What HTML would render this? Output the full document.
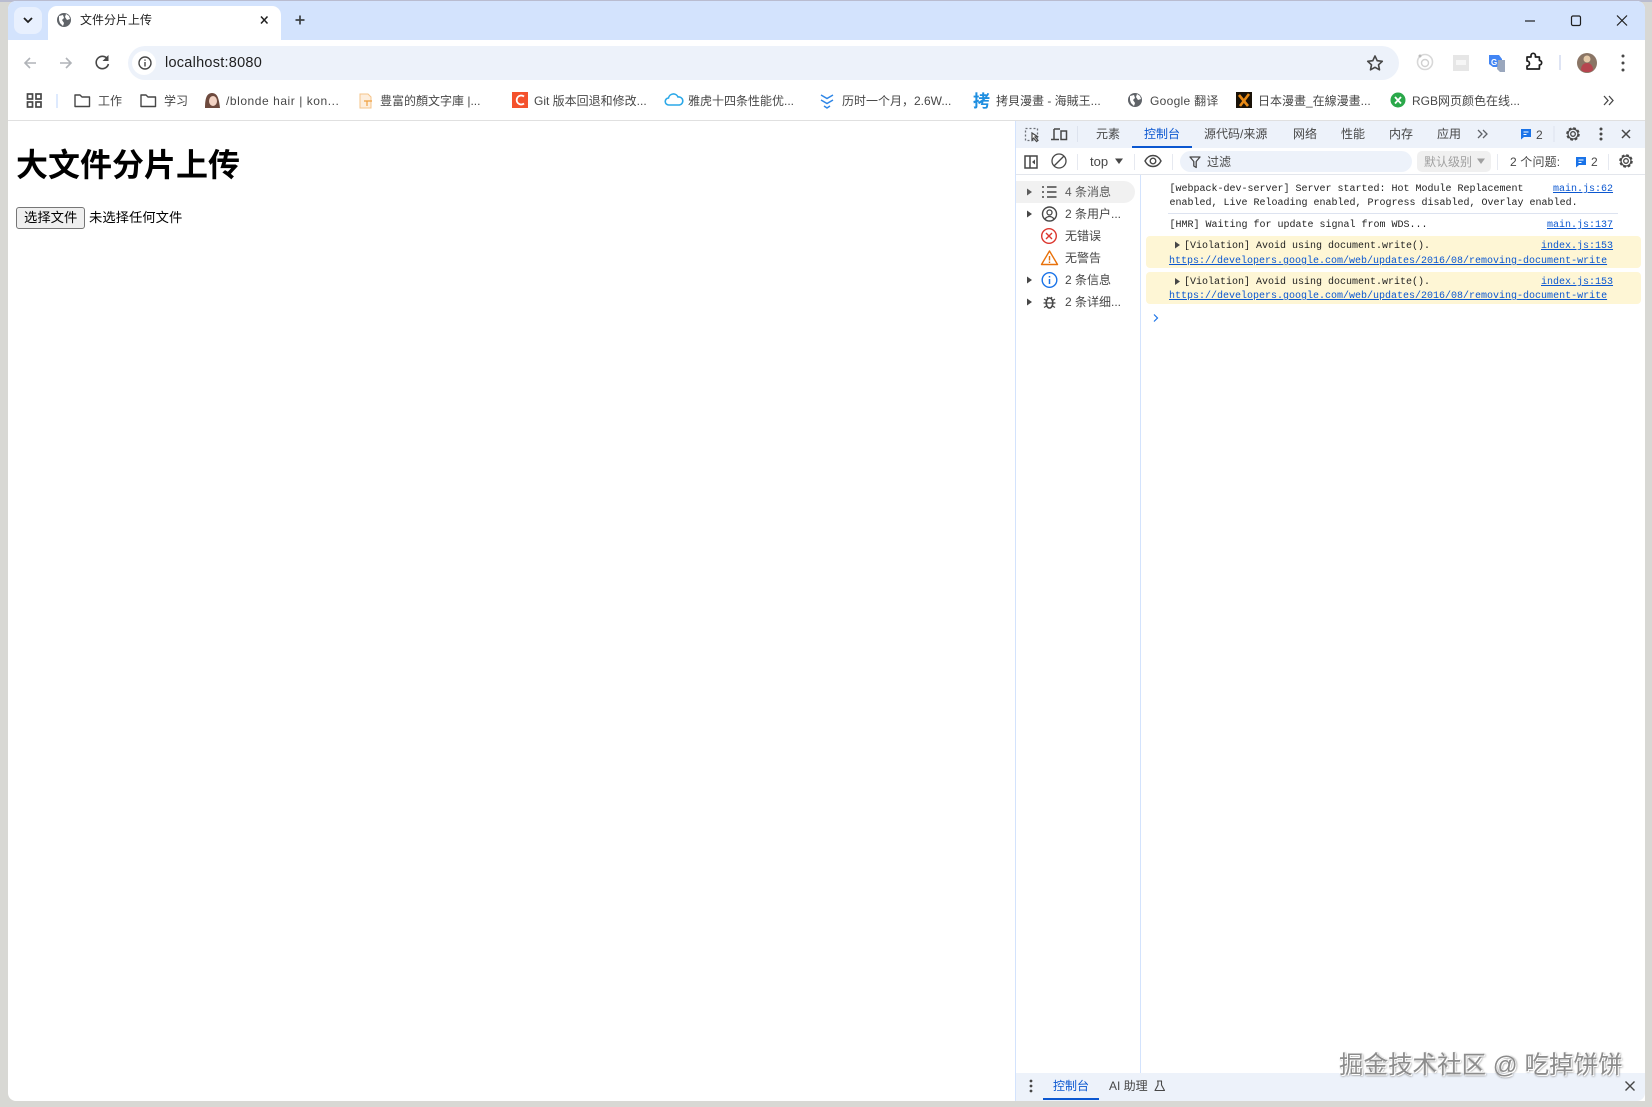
<!DOCTYPE html>
<html lang="zh">
<head>
<meta charset="utf-8">
<title>文件分片上传</title>
<style>
html,body{margin:0;padding:0;width:1652px;height:1107px;overflow:hidden;background:#d8d8d4}
body{position:relative;font-family:"Liberation Sans","Noto Sans CJK SC",sans-serif;color:#1f1f1f}
.b{position:absolute}
.t{position:absolute;white-space:nowrap;line-height:20px;height:20px;font-size:12px}
.bm{color:#474747;font-size:12px}
.dt{color:#474747;font-size:12px}
.m{position:absolute;white-space:nowrap;font-family:"Liberation Mono","Noto Sans CJK SC",monospace;font-size:10px;line-height:14px;height:14px;color:#1f1f1f}
.l{color:#0b57d0;text-decoration:underline}
svg{position:absolute;left:0;top:0}
</style>
</head>
<body>
<!-- window -->
<div class="b" style="left:0;top:0;width:1652px;height:2px;background:#b9bcd0"></div>
<div class="b" style="left:8px;top:1px;width:1637px;height:1100px;background:#fff;border-radius:8px;overflow:hidden">
  <div class="b" style="left:0;top:0;width:1637px;height:39px;background:#d3e3fd"></div>
</div>
<!-- down button -->
<div class="b" style="left:14px;top:7px;width:28px;height:27px;background:#e8f0fe;border-radius:8px"></div>
<!-- active tab -->
<div class="b" style="left:48px;top:6px;width:233px;height:35px;background:#fff;border-radius:9px 9px 0 0"></div>
<div class="t" style="left:80px;top:10px;color:#1f1f1f">文件分片上传</div>
<!-- omnibox -->
<div class="b" style="left:128px;top:46px;width:1271px;height:34px;background:#edf2fa;border-radius:17px"></div>
<div class="b" style="left:132px;top:51px;width:24px;height:24px;background:#fff;border-radius:12px"></div>
<div class="t" style="left:165px;top:53px;font-size:14.5px;color:#1f1f1f;letter-spacing:.25px">localhost:8080</div>
<!-- bookmarks -->
<div class="b" style="left:8px;top:120px;width:1637px;height:1px;background:#e0e0e0"></div>
<div class="t bm" style="left:98px;top:91px">工作</div>
<div class="t bm" style="left:164px;top:91px">学习</div>
<div class="t bm" style="left:226px;top:91px;letter-spacing:.55px">/blonde hair | kon...</div>
<div class="t bm" style="left:380px;top:91px">豊富的顏文字庫 |...</div>
<div class="t bm" style="left:534px;top:91px">Git 版本回退和修改...</div>
<div class="t bm" style="left:688px;top:91px">雅虎十四条性能优...</div>
<div class="t bm" style="left:842px;top:91px">历时一个月，2.6W...</div>
<div class="t bm" style="left:996px;top:91px">拷貝漫畫 - 海賊王...</div>
<div class="t bm" style="left:1150px;top:91px;letter-spacing:.3px">Google 翻译</div>
<div class="t bm" style="left:1258px;top:91px">日本漫畫_在線漫畫...</div>
<div class="t bm" style="left:1412px;top:91px">RGB网页颜色在线...</div>
<!-- page -->
<div class="t" style="left:16px;top:147px;height:36px;line-height:36px;font-size:32px;font-weight:700;color:#000">大文件分片上传</div>
<div class="b" style="left:16px;top:207px;width:67px;height:20px;background:#efefef;border:1px solid #767676;border-radius:3px"></div>
<div class="t" style="left:24px;top:208px;font-size:13.33px;color:#000">选择文件</div>
<div class="t" style="left:89px;top:208px;font-size:13.33px;color:#000">未选择任何文件</div>
<!-- devtools -->
<div class="b" style="left:1015px;top:121px;width:630px;height:980px;background:#fff;border-left:1px solid #d3e3fd;box-sizing:border-box"></div>
<div class="b" style="left:1016px;top:121px;width:629px;height:27px;background:#edf2fa"></div>
<div class="b" style="left:1016px;top:174px;width:629px;height:1px;background:#e3e6ec"></div>
<div class="b" style="left:1140px;top:175px;width:1px;height:898px;background:#d3e3fd"></div>
<div class="b" style="left:1132px;top:146px;width:60px;height:2px;background:#0b57d0"></div>
<div class="t dt" style="left:1096px;top:124px">元素</div>
<div class="t" style="left:1144px;top:124px;color:#0b57d0">控制台</div>
<div class="t dt" style="left:1204px;top:124px">源代码/来源</div>
<div class="t dt" style="left:1293px;top:124px">网络</div>
<div class="t dt" style="left:1341px;top:124px">性能</div>
<div class="t dt" style="left:1389px;top:124px">内存</div>
<div class="t dt" style="left:1437px;top:124px">应用</div>
<div class="t dt" style="left:1536px;top:125px">2</div>
<!-- row 2 -->
<div class="t dt" style="left:1090px;top:152px;font-size:13px">top</div>
<div class="b" style="left:1180px;top:151px;width:232px;height:21px;background:#edf2fa;border-radius:11px"></div>
<div class="t dt" style="left:1207px;top:152px">过滤</div>
<div class="b" style="left:1417px;top:151px;width:74px;height:21px;background:#f0f0f0;border-radius:5px"></div>
<div class="t" style="left:1424px;top:152px;color:#a0a0a0">默认级别</div>
<div class="t dt" style="left:1510px;top:152px;letter-spacing:.15px">2 个问题:</div>
<div class="t dt" style="left:1591px;top:152px">2</div>
<!-- sidebar -->
<div class="b" style="left:1016px;top:181px;width:119px;height:22px;background:#f1f1f1;border-radius:0 11px 11px 0"></div>
<div class="t" style="left:1065px;top:182px;color:#5c5c5c">4 条消息</div>
<div class="t dt" style="left:1065px;top:204px">2 条用户...</div>
<div class="t dt" style="left:1065px;top:226px">无错误</div>
<div class="t dt" style="left:1065px;top:248px">无警告</div>
<div class="t dt" style="left:1065px;top:270px">2 条信息</div>
<div class="t dt" style="left:1065px;top:292px">2 条详细...</div>
<!-- console -->
<div class="m" style="left:1169.500px;top:183px">[webpack-dev-server] Server started: Hot Module Replacement</div>
<div class="m" style="left:1169.500px;top:197px">enabled, Live Reloading enabled, Progress disabled, Overlay enabled.</div>
<div class="m l" style="left:1553px;top:183px">main.js:62</div>
<div class="b" style="left:1168px;top:213px;width:450px;height:1px;background:#dde3f0"></div>
<div class="m" style="left:1169.500px;top:219px">[HMR] Waiting for update signal from WDS...</div>
<div class="m l" style="left:1547px;top:219px">main.js:137</div>
<div class="b" style="left:1146px;top:236px;width:495px;height:32px;background:#fef6d5;border-radius:4px"></div>
<div class="m" style="left:1184px;top:240px">[Violation] Avoid using document.write().</div>
<div class="m l" style="left:1541px;top:240px">index.js:153</div>
<div class="m l" style="left:1169px;top:255px">https://developers.google.com/web/updates/2016/08/removing-document-write</div>
<div class="b" style="left:1146px;top:272px;width:495px;height:32px;background:#fef6d5;border-radius:4px"></div>
<div class="m" style="left:1184px;top:276px">[Violation] Avoid using document.write().</div>
<div class="m l" style="left:1541px;top:276px">index.js:153</div>
<div class="m l" style="left:1169px;top:290px">https://developers.google.com/web/updates/2016/08/removing-document-write</div>
<!-- drawer -->
<div class="b" style="left:1016px;top:1073px;width:629px;height:28px;background:#edf2fa;border-radius:0 0 8px 0"></div>
<div class="b" style="left:1043px;top:1098px;width:56px;height:2px;background:#0b57d0"></div>
<div class="t" style="left:1053px;top:1076px;color:#0b57d0">控制台</div>
<div class="t dt" style="left:1109px;top:1076px">AI 助理</div>
<!-- watermark -->
<div class="t" style="left:1339px;top:1051px;height:30px;line-height:30px;font-size:24.5px;color:#8c8c8c;text-shadow:1px 1px 0 #fff,-1px -1px 0 #fff,1px 1px 2px #555">掘金技术社区 @ 吃掉饼饼</div>

<svg width="1652" height="1107" viewBox="0 0 1652 1107" fill="none">
  <!-- tab strip -->
  <path d="M24 18l4 4 4-4" stroke="#1f1f1f" stroke-width="1.800"/>
  <circle cx="64" cy="20" r="7" fill="#5f6368"/>
  <path d="M59 16l4-1 1 3-2 2 2 3-1 3-3-3-1-3zM66 14l3 2 1 3-3 1-2-3z" fill="#fff"/>
  <path d="M261 16.500l6.500 7m0-7l-6.500 7" stroke="#1f1f1f" stroke-width="1.500"/>
  <path d="M300 15.500v9m-4.500-4.500h9" stroke="#3c4043" stroke-width="1.700"/>
  <!-- window controls -->
  <path d="M1525 21h10" stroke="#1f1f1f" stroke-width="1.200"/>
  <rect x="1571.500" y="16" width="9" height="9.500" rx="1.500" stroke="#1f1f1f" stroke-width="1.200"/>
  <path d="M1617 15.500l10 10m0-10l-10 10" stroke="#1f1f1f" stroke-width="1.200"/>
  <!-- nav -->
  <path d="M36 67H25m5-5l-5 5 5 5" transform="translate(0,-4)" stroke="#b0b3b8" stroke-width="1.600"/>
  <path d="M60 67h11m-5-5l5 5-5 5" transform="translate(0,-4)" stroke="#b0b3b8" stroke-width="1.600"/>
  <path d="M107.500 59a6.200 6.200 0 1 0 .9 5" stroke="#474747" stroke-width="1.600"/>
  <path d="M108.500 55v6h-6z" fill="#474747"/>
  <circle cx="145" cy="63" r="6" stroke="#474747" stroke-width="1.400"/>
  <path d="M145 62v4.500M145 59.500v1.300" stroke="#474747" stroke-width="1.400"/>
  <!-- star -->
  <path d="M1375 56l2.200 4.700 5.100.6-3.800 3.500 1 5-4.500-2.500-4.500 2.500 1-5-3.800-3.500 5.100-.6z" stroke="#474747" stroke-width="1.600" stroke-linejoin="round"/>
  <!-- extensions -->
  <circle cx="1425" cy="62" r="7.500" stroke="#d8d8d8" stroke-width="1.600"/>
  <circle cx="1425" cy="63" r="3.500" stroke="#d0d0d0" stroke-width="1.400"/>
  <circle cx="1420" cy="56" r="1.500" fill="#bbb"/>
  <rect x="1453" y="55" width="16" height="16" fill="#e6e6e6"/>
  <rect x="1456" y="60" width="10" height="5" fill="#f6f6f6"/>
  <path d="M1489 55h10l3 4v9l-3-1h-6l-4-3z" fill="#4285f4"/>
  <path d="M1498 60h7v12h-5l-3-3z" fill="#9aa7bd"/>
  <text x="1491" y="65" font-size="8" font-weight="700" fill="#fff" font-family="Liberation Sans">G</text>
  <path d="M1527 57h4v-1.500a2.200 2.200 0 0 1 4.400 0V57h4v3.500a2.200 2.200 0 0 1 0 4.500V69h-12.400v-3a2.500 2.500 0 0 0 0-5z" stroke="#1f1f1f" stroke-width="1.700" stroke-linejoin="round"/>
  <path d="M1560 55v15" stroke="#d3daf0" stroke-width="1.500"/>
  <circle cx="1587" cy="63" r="10" fill="#8a7565"/>
  <path d="M1581 70c0-5 3-7 6-7s6 2 6 7l-3 2h-6z" fill="#b5454f"/>
  <circle cx="1587" cy="59" r="3.500" fill="#e4c9a8"/>
  <circle cx="1623" cy="56" r="1.500" fill="#474747"/><circle cx="1623" cy="63" r="1.500" fill="#474747"/><circle cx="1623" cy="70" r="1.500" fill="#474747"/>
  <!-- bookmarks icons -->
  <g stroke="#474747" stroke-width="1.700"><rect x="27.500" y="94" width="5" height="5"/><rect x="36" y="94" width="5" height="5"/><rect x="27.500" y="102" width="5" height="5"/><rect x="36" y="102" width="5" height="5"/></g>
  <path d="M57 94v14" stroke="#d3e3fd" stroke-width="1.500"/>
  <path d="M75 95h5l2 2h7.500v9.500H75z" stroke="#474747" stroke-width="1.400" stroke-linejoin="round"/>
  <path d="M141 95h5l2 2h7.500v9.500H141z" stroke="#474747" stroke-width="1.400" stroke-linejoin="round"/>
  <path d="M205 108c0-8 1-15 7-15s7 7 8 15z" fill="#6e4a3e"/>
  <ellipse cx="213" cy="101" rx="4" ry="5" fill="#f3d3c4"/>
  <path d="M360 94h8l3 3v11h-11z" fill="#fdeedd" stroke="#f5c48a"/>
  <path d="M364 101h8M367 101v5" stroke="#f0a040" stroke-width="1.200"/>
  <rect x="512" y="92" width="16" height="16" fill="#f4512c"/>
  <path d="M524 96.500a4.500 4.500 0 1 0 0 7" stroke="#fff" stroke-width="1.800"/>
  <path d="M669 105a3.500 3.500 0 0 1-.5-7 5 5 0 0 1 9.500-1 4 4 0 0 1 1.500 8z" stroke="#2aa8e8" stroke-width="1.600"/>
  <path d="M821 95l6 3.500 6-3.500M821 100l6 3.500 6-3.500M824 106l3 2 3-2" stroke="#2f86e6" stroke-width="1.500"/>
  <text x="973" y="107" font-size="17" font-weight="700" fill="#1e8ee0" font-family="Liberation Sans, Noto Sans CJK SC, sans-serif">拷</text>
  <circle cx="1135" cy="100" r="7" fill="#5f6368"/>
  <path d="M1130 96l4-1 1 3-2 2 2 3-1 3-3-3-1-3zM1137 94l3 2 1 3-3 1-2-3z" fill="#fff"/>
  <rect x="1236" y="92" width="16" height="16" fill="#1a1208"/>
  <path d="M1239 95l9 11M1249 94l-9 12" stroke="#e88a16" stroke-width="2.600"/>
  <circle cx="1398" cy="100" r="7.500" fill="#2aa84a"/>
  <path d="M1395 97l6 6.500m0-6.500l-6 6.500" stroke="#fff" stroke-width="1.800"/>
  <path d="M1604 96l4 4.500-4 4.500M1609 96l4 4.500-4 4.500" stroke="#474747" stroke-width="1.300"/>
  <!-- devtools tabbar -->
  <rect x="1025.500" y="128.500" width="12" height="12" stroke="#6b6f76" stroke-width="1.300" stroke-dasharray="2 2"/>
  <path d="M1032 133v7l1.600-1.800 3 3.300 1.400-1.200-3-3.300 2.400-.5z" fill="#fff" stroke="#474747" stroke-width="1.200"/>
  <path d="M1054 129h6M1054 129v10M1051 139.500h8" stroke="#474747" stroke-width="1.500"/>
  <rect x="1061" y="131" width="5.500" height="8.500" stroke="#474747" stroke-width="1.500"/>
  <path d="M1077.500 126v16" stroke="#dde3ee"/>
  <path d="M1478 130l4 4-4 4M1483 130l4 4-4 4" stroke="#5f6368" stroke-width="1.300"/>
  <path d="M1521 129h10v8h-7l-3 2.500z" fill="#1a73e8"/>
  <path d="M1523.500 132h5M1523.500 134.500h3" stroke="#fff"/>
  <path d="M1554 126v16" stroke="#dde3ee"/>
  <g transform="translate(1573,134)" stroke="#474747"><circle r="5.600" stroke-width="2.400" stroke-dasharray="2.600 1.800"/><circle r="5" stroke-width="1.200"/><circle r="2.300" stroke-width="1.300"/></g>
  <circle cx="1601" cy="129" r="1.500" fill="#474747"/><circle cx="1601" cy="134" r="1.500" fill="#474747"/><circle cx="1601" cy="139" r="1.500" fill="#474747"/>
  <path d="M1622 130l8 8m0-8l-8 8" stroke="#474747" stroke-width="1.500"/>
  <!-- toolbar row 2 -->
  <rect x="1025" y="156" width="12" height="12" stroke="#474747" stroke-width="1.500"/>
  <path d="M1030 156v12" stroke="#474747" stroke-width="1.500"/>
  <path d="M1035 159.500v5l-3-2.500z" fill="#474747"/>
  <circle cx="1059" cy="161" r="7" stroke="#474747" stroke-width="1.300"/>
  <path d="M1054 166l10-10" stroke="#474747" stroke-width="1.300"/>
  <path d="M1077.500 154v16M1134.500 154v16M1172.500 154v16M1497.500 154v16M1608.500 154v16" stroke="#e6e9f0"/>
  <path d="M1115 158.500h8l-4 5.500z" fill="#474747"/>
  <path d="M1145 161c2-4 5-5.500 8-5.500s6 1.500 8 5.500c-2 4-5 5.500-8 5.500s-6-1.500-8-5.500z" stroke="#474747" stroke-width="1.400"/>
  <circle cx="1153" cy="161" r="2.800" stroke="#474747" stroke-width="1.400"/>
  <path d="M1190 157h10l-3.800 4.500v6l-2.400-1.500v-4.500z" stroke="#474747" stroke-width="1.300" stroke-linejoin="round"/>
  <path d="M1477 158.500h8l-4 5.500z" fill="#a0a0a0"/>
  <path d="M1576 157h10v8h-7l-3 2.500z" fill="#1a73e8"/>
  <path d="M1578.500 160h5M1578.500 162.500h3" stroke="#fff"/>
  <g transform="translate(1626,161)" stroke="#474747"><circle r="5.600" stroke-width="2.400" stroke-dasharray="2.600 1.800"/><circle r="5" stroke-width="1.200"/><circle r="2.300" stroke-width="1.300"/></g>
  <!-- sidebar icons -->
  <g fill="#474747">
    <path d="M1027 188.500l5 3.500-5 3.500z" fill="#5c5c5c"/>
    <path d="M1027 210.500l5 3.500-5 3.500z"/>
    <path d="M1027 276.500l5 3.500-5 3.500z"/>
    <path d="M1027 298.500l5 3.500-5 3.500z"/>
  </g>
  <path d="M1042 187h2M1042 192h2M1042 197h2M1047 187h9.500M1047 192h9.500M1047 197h9.500" stroke="#474747" stroke-width="1.500"/>
  <circle cx="1049.500" cy="214" r="7" stroke="#474747" stroke-width="1.400"/>
  <circle cx="1049.500" cy="212.500" r="2.500" stroke="#474747" stroke-width="1.300"/>
  <path d="M1045 219c1.500-2 3-2.500 4.500-2.500s3 .5 4.500 2.500" stroke="#474747" stroke-width="1.300"/>
  <circle cx="1049" cy="236" r="7.300" stroke="#dc362e" stroke-width="1.400"/>
  <path d="M1046 233l6 6m0-6l-6 6" stroke="#dc362e" stroke-width="1.400"/>
  <path d="M1049.500 251l8 13.500h-16z" stroke="#e8710a" stroke-width="1.400" stroke-linejoin="round"/>
  <path d="M1049.500 256v4.500M1049.500 261.500v1.500" stroke="#e8710a" stroke-width="1.400"/>
  <circle cx="1049.500" cy="280" r="7.300" stroke="#1a73e8" stroke-width="1.400"/>
  <path d="M1049.500 279v5M1049.500 276v1.500" stroke="#1a73e8" stroke-width="1.500"/>
  <ellipse cx="1049.500" cy="303" rx="3.300" ry="5" stroke="#474747" stroke-width="1.600"/>
  <path d="M1044 299l2.500 1.500M1055 299l-2.500 1.500M1043.500 303h2.500M1053 303h2.500M1044 307.500l2.500-1.500M1055 307.500l-2.500-1.500M1047 297l1 1.500M1052 297l-1 1.500M1047 303h5" stroke="#474747" stroke-width="1.200"/>
  <!-- console arrows -->
  <path d="M1175 241.500l5 3.500-5 3.500z" fill="#474747"/>
  <path d="M1175 278l5 3.500-5 3.500z" fill="#474747"/>
  <path d="M1154 314.500l3.500 3.500-3.500 3.500" stroke="#1a73e8" stroke-width="1.200"/>
  <!-- drawer icons -->
  <circle cx="1031" cy="1081" r="1.400" fill="#474747"/><circle cx="1031" cy="1086" r="1.400" fill="#474747"/><circle cx="1031" cy="1091" r="1.400" fill="#474747"/>
  <path d="M1157 1081h5M1158 1081v4l-3 5.500h9.500l-3-5.500v-4" stroke="#474747" stroke-width="1.100" stroke-linejoin="round"/>
  <path d="M1625.500 1081.500l9 9m0-9l-9 9" stroke="#474747" stroke-width="1.400"/>
</svg>
</body>
</html>
